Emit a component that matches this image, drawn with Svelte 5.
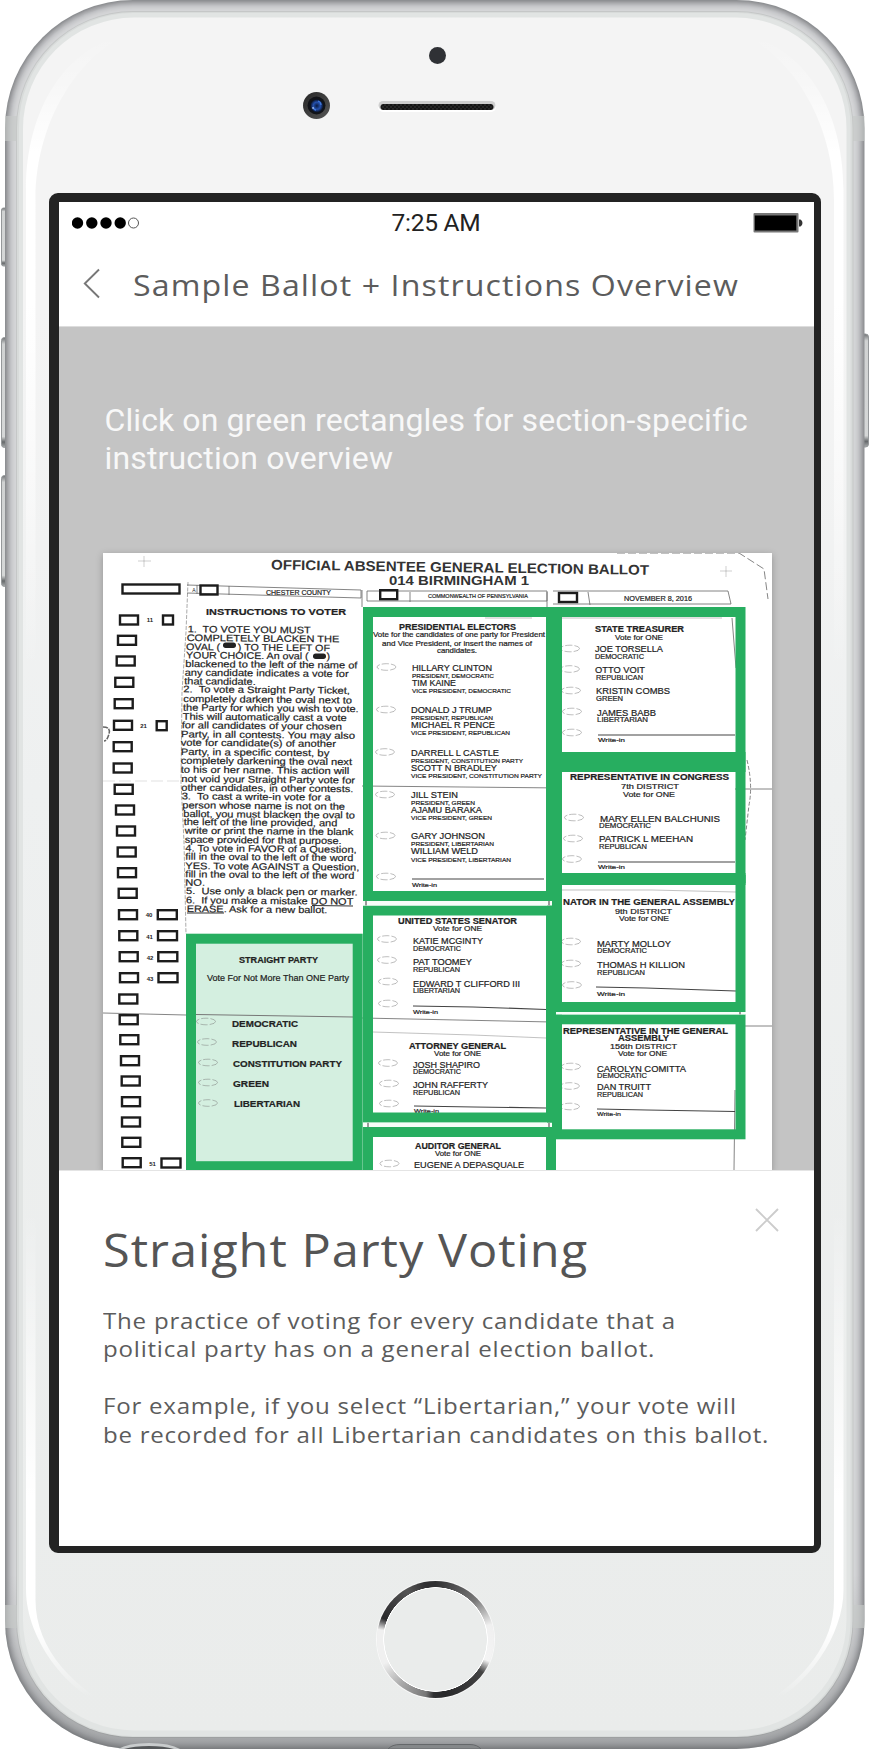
<script>
  const STRETCH = 1.07;

  // Spread a line's letters so that it fills the given measure.
  function fit(node, width) {
    const natural = node.offsetWidth;
    const wide = getComputedStyle(node).transform !== 'none';
    node.style.letterSpacing = ((wide ? width / STRETCH : width) - natural) / (node.textContent.length - 1) + 'px';
  }

  const shell = ['#8e9093', '#98999c', '#a3a4a7', '#adaeb1', '#b6b7ba', '#bfc0c3', '#c6c7ca', '#cbccce', '#cfd0d2', '#d2d3d5', '#d4d5d7', '#c5c7c7'];

  const boxes = [
    [129, 620], [127, 640.3], [125.7, 661], [124.3, 682.3], [123.7, 703.7], [123, 725.3], [122.7, 746.7],
    [122.7, 768], [123.7, 789.3], [125, 810], [126, 831], [126.7, 852], [127, 872.7], [127.7, 893.3],
    [128, 914.7], [128.3, 935.7], [128.7, 956.7], [129, 977.7], [128.3, 999], [128.7, 1019.7], [129.3, 1039.7],
    [130, 1060.7], [130.7, 1081], [131, 1101.7], [131, 1122], [131.3, 1142.3], [131.7, 1162.7]
  ].map(([x, y]) => [x, y, 18]).concat([
    [168, 620, 10], [161.7, 725.7, 10], [167.3, 914.7, 19], [167.5, 935.7, 19], [167.8, 956.7, 19], [168, 977.7, 19], [171, 1163, 19],
    [209, 590, 17], [388.7, 594.7, 17], [568, 597.5, 18]
  ]);
  const codes = [['11', 150, 622], ['21', 143.5, 728], ['40', 149, 917], ['41', 149.5, 938.5], ['42', 150, 959.5], ['43', 150, 980.5], ['51', 152.5, 1166]];

  // text, left and right edge, baseline
  const instructions = [
    ['1.  TO VOTE YOU MUST', 293, 662, 277], ['COMPLETELY BLACKEN THE', 290, 748, 303],
    ['OVAL (      ) TO THE LEFT OF', 288, 720, 330], ['YOUR CHOICE. An oval (      )', 288, 720, 355],
    ['blackened to the left of the name of', 286, 802, 381], ['any candidate indicates a vote for', 284, 776, 407],
    ['that candidate.', 283, 497, 433], ['2.  To vote a Straight Party Ticket,', 280, 780, 457],
    ['completely darken the oval next to', 280, 786, 486], ['the Party for which you wish to vote.', 279, 806, 512],
    ['This will automatically cast a vote', 278, 770, 539], ['for all candidates of your chosen', 275, 756, 565],
    ['Party, in all contests. You may also', 273, 795, 592], ['vote for candidate(s) of another', 272, 738, 617],
    ['Party, in a specific contest, by', 272, 718, 645], ['completely darkening the oval next', 272, 786, 671],
    ['to his or her name. This action will', 272, 778, 698], ['not void your Straight Party vote for', 274, 795, 726],
    ['other candidates, in other contests.', 274, 790, 752], ['3.  To cast a write-in vote for a', 275, 722, 778],
    ['person whose name is not on the', 277, 765, 805], ['ballot, you must blacken the oval to', 280, 795, 831],
    ['the left of the line provided, and', 281, 742, 855], ['write or print the name in the blank', 284, 790, 881],
    ['space provided for that purpose.', 284, 755, 908], ['4. To vote in FAVOR of a Question,', 286, 800, 934],
    ['fill in the oval to the left of the word', 286, 790, 959], ['YES. To vote AGAINST a Question,', 286, 808, 987],
    ['fill in the oval to the left of the word', 286, 793, 1012], ['NO.', 286, 345, 1037],
    ['5.  Use only a black pen or marker.', 288, 803, 1062], ['6.  If you make a mistake DO NOT', 288, 790, 1090],
    ['ERASE. Ask for a new ballot.', 290, 712, 1116]
  ].map(([t, a, b, y]) => [t, 90 + a / 3, 90 + b / 3, 540 + y / 3]);

  // text, left and right edge, baseline, type size, weight
  const labels = [
    ['CHESTER COUNTY', 266, 331, 594.5, 7, 400], ['COMMONWEALTH OF PENNSYLVANIA', 428, 528, 597.5, 6, 400], ['NOVEMBER 8, 2016', 624, 692, 600.5, 7, 400],
    ['INSTRUCTIONS TO VOTER', 206, 346, 614.5, 9, 700],
    ['PRESIDENTIAL ELECTORS', 399, 516, 630, 8.5, 700], ['Vote for the candidates of one party for President', 373, 545, 637, 7, 400],
    ['and Vice President, or insert the names of', 382, 532, 645.5, 7, 400], ['candidates.', 437, 477, 653, 7, 400],
    ['HILLARY CLINTON', 412, 492, 671, 8.5, 500], ['PRESIDENT, DEMOCRATIC', 412, 494, 678, 6, 400], ['TIM KAINE', 412, 456, 686, 8.5, 500], ['VICE PRESIDENT, DEMOCRATIC', 412, 511, 693, 6, 400],
    ['DONALD J TRUMP', 411, 492, 713, 8.5, 500], ['PRESIDENT, REPUBLICAN', 411, 493, 720, 6, 400], ['MICHAEL R PENCE', 411, 495, 728, 8.5, 500], ['VICE PRESIDENT, REPUBLICAN', 411, 510, 735, 6, 400],
    ['DARRELL L CASTLE', 411, 499, 755.5, 8.5, 500], ['PRESIDENT, CONSTITUTION PARTY', 411, 523, 762.5, 6, 400], ['SCOTT N BRADLEY', 411, 497, 771, 8.5, 500], ['VICE PRESIDENT, CONSTITUTION PARTY', 411, 542, 778, 6, 400],
    ['JILL STEIN', 411, 458, 798, 8.5, 500], ['PRESIDENT, GREEN', 411, 475, 804.5, 6, 400], ['AJAMU BARAKA', 411, 482, 813, 8.5, 500], ['VICE PRESIDENT, GREEN', 411, 492, 819.5, 6, 400],
    ['GARY JOHNSON', 411, 485, 839, 8.5, 500], ['PRESIDENT, LIBERTARIAN', 411, 494, 846, 6, 400], ['WILLIAM WELD', 411, 478, 854, 8.5, 500], ['VICE PRESIDENT, LIBERTARIAN', 411, 511, 861.5, 6, 400],
    ['Write-in', 412, 437, 887, 6, 400],
    ['STATE TREASURER', 595, 684, 632, 8.5, 700], ['Vote for ONE', 615, 663, 639.5, 7.5, 400],
    ['JOE TORSELLA', 595, 663, 652, 8.5, 500], ['DEMOCRATIC', 595, 644, 659, 7, 400], ['OTTO VOIT', 595, 645, 673, 8.5, 500], ['REPUBLICAN', 596, 643, 680, 7, 400],
    ['KRISTIN COMBS', 596, 670, 694, 8.5, 500], ['GREEN', 596, 623, 701, 7, 400], ['JAMES BABB', 597, 656, 715.5, 8.5, 500], ['LIBERTARIAN', 597, 648, 722, 7, 400], ['Write-in', 598, 625, 742, 6, 400],
    ['REPRESENTATIVE IN CONGRESS', 570, 729, 780, 8.5, 700], ['7th DISTRICT', 621, 679, 789, 7.5, 400], ['Vote for ONE', 623, 675, 796.5, 7.5, 400],
    ['MARY ELLEN BALCHUNIS', 600, 720, 821.5, 8.5, 500], ['DEMOCRATIC', 599, 651, 828, 7, 400], ['PATRICK L MEEHAN', 599, 693, 842, 8.5, 500], ['REPUBLICAN', 599, 647, 849, 7, 400], ['Write-in', 598, 625, 869, 6, 400],
    ['NATOR IN THE GENERAL ASSEMBLY', 563, 735, 905, 9, 700], ['9th DISTRICT', 615, 672, 913.5, 7.5, 400], ['Vote for ONE', 619, 669, 921, 7.5, 400],
    ['MARTY MOLLOY', 597, 671, 946.5, 9, 500], ['DEMOCRATIC', 597, 647, 953, 7, 400], ['THOMAS H KILLION', 597, 685, 968, 9, 500], ['REPUBLICAN', 597, 645, 975, 7, 400], ['Write-in', 597, 625, 996, 6, 400],
    ['REPRESENTATIVE IN THE GENERAL', 563, 728, 1033.5, 8.5, 700], ['ASSEMBLY', 618, 669, 1040.5, 8.5, 700], ['156th DISTRICT', 610, 677, 1048.5, 7.5, 400], ['Vote for ONE', 618, 667, 1056, 7, 400],
    ['CAROLYN COMITTA', 597, 686, 1071.5, 8.5, 500], ['DEMOCRATIC', 597, 647, 1077.5, 7, 400], ['DAN TRUITT', 597, 651, 1090, 8.5, 500], ['REPUBLICAN', 597, 643, 1097, 7, 400], ['Write-in', 597, 621, 1116, 6, 400],
    ['UNITED STATES SENATOR', 398, 517, 923.5, 8.5, 700], ['Vote for ONE', 433, 482, 931, 7.5, 400],
    ['KATIE MCGINTY', 413, 483, 943.5, 9, 500], ['DEMOCRATIC', 413, 461, 951, 7, 400], ['PAT TOOMEY', 413, 472, 965, 9, 500], ['REPUBLICAN', 413, 460, 972, 7, 400],
    ['EDWARD T CLIFFORD III', 413, 520, 987, 9, 500], ['LIBERTARIAN', 413, 460, 993, 7, 400], ['Write-in', 413, 438, 1014, 6, 400],
    ['ATTORNEY GENERAL', 409, 506, 1049, 8.5, 700], ['Vote for ONE', 434, 481, 1055.5, 7, 400],
    ['JOSH SHAPIRO', 413, 480, 1068, 9, 500], ['DEMOCRATIC', 413, 461, 1074, 7, 400], ['JOHN RAFFERTY', 413, 488, 1088, 9, 500], ['REPUBLICAN', 413, 460, 1094.5, 7, 400], ['Write-in', 414, 439, 1113, 6, 400],
    ['AUDITOR GENERAL', 415, 501, 1149, 9, 700], ['Vote for ONE', 435, 481, 1156, 7, 400], ['EUGENE A DEPASQUALE', 414, 524, 1168, 9, 500],
    ['STRAIGHT PARTY', 239, 318, 963, 8.5, 700], ['Vote For Not More Than ONE Party', 207, 349, 980.5, 8.5, 400],
    ['DEMOCRATIC', 232, 298, 1026.5, 9.5, 700], ['REPUBLICAN', 232, 297, 1046.5, 9.5, 700], ['CONSTITUTION PARTY', 233, 342, 1066.5, 9.5, 700], ['GREEN', 233, 269, 1087, 9.5, 700], ['LIBERTARIAN', 234, 300, 1107, 9.5, 700]
  ];

  const ovals = [
    [386.5, 667], [386, 709.5], [385, 752], [385, 794.5], [385.5, 835.5], [386, 876.5],
    [570, 648.5], [570, 669], [571, 690.5], [572, 711.5], [572, 732.5], [574, 817.5], [573, 838.5], [572, 859],
    [571, 941.5], [571, 963.5], [572, 985], [571, 1066.5], [570, 1086], [570, 1106.5],
    [387, 939], [387, 960], [388, 981.5], [388, 1003.5], [388, 1063], [389, 1083.5], [389, 1103.5], [389.5, 1163.5],
    [206, 1021.5], [207, 1042], [208, 1062.5], [208, 1082.5], [208, 1103]
  ];

  const zones = [
    [368, 612, 183, 284], [368, 910.5, 183, 207], [368, 1132, 183, 60],
    [557, 612, 183.5, 145], [557, 767, 183.5, 111], [557, 880, 183.5, 127], [557, 1019.3, 183.5, 115]
  ];
</script>

<main class="phone">
  <svg class="frame" width="869" height="1749" viewBox="0 0 869 1749">
    <defs>
      <linearGradient id="face" x1="0" y1="0" x2="0" y2="1"><stop offset="0" stop-color="#f4f4f4" /><stop offset=".17" stop-color="#f4f4f4" /><stop offset=".45" stop-color="#eef0f0" /><stop offset="1" stop-color="#eaeceb" /></linearGradient>
      <linearGradient id="shine" x1="0" y1="0" x2="0" y2="1"><stop offset="0" stop-color="#fff" stop-opacity="0" /><stop offset=".03" stop-color="#fff" stop-opacity=".3" /><stop offset=".07" stop-color="#fff" /><stop offset=".16" stop-color="#fff" /><stop offset=".38" stop-color="#fff" stop-opacity="0" /><stop offset=".7" stop-color="#fff" stop-opacity="0" /><stop offset=".87" stop-color="#fff" /><stop offset=".95" stop-color="#fff" /><stop offset=".99" stop-color="#fff" stop-opacity="0" /></linearGradient>
      <linearGradient id="key" x1="0" y1="0" x2="0" y2="1"><stop offset="0" stop-color="#6e7173" /><stop offset=".06" stop-color="#d0d2d2" /><stop offset=".9" stop-color="#d5d7d7" /><stop offset=".95" stop-color="#66696b" /><stop offset="1" stop-color="#aaadae" /></linearGradient>
      <linearGradient id="foot" x1="0" y1="0" x2="0" y2="1"><stop offset=".9" stop-color="#777a7c" stop-opacity="0" /><stop offset="1" stop-color="#66696b" stop-opacity=".45" /></linearGradient>
    </defs>
    <g fill="url(#key)" stroke="#95989a" stroke-width="1">
      <rect x="1.5" y="208" width="8" height="58" rx="2" />
      <rect x="1.5" y="337.5" width="9" height="110" rx="3" />
      <rect x="1.5" y="475.5" width="9" height="111" rx="3" />
      <rect x="859" y="334" width="9.500" height="113" rx="3" />
    </g>
    {#each shell as color, i}
      <rect x={5 + i} y={i} width={859.5 - 2 * i} height={1749 - 2 * i} rx={128 - i} fill={color} />
    {/each}
    <rect x="5" y="0" width="859.5" height="1749" rx="128" fill="url(#foot)" />
    <path d="M5 116h12v25H5zM852.500 116h12v25h-12zM5 1605h12v23H5zM852.500 1605h12v23h-12z" fill="#c6c9c8" opacity=".65" />
    <rect x="17" y="12" width="835.5" height="1725" rx="116" fill="#d8dbda" />
    <rect x="19" y="13" width="831.5" height="1723" rx="114" fill="#e1e4e3" />
    <rect x="23" y="17.500" width="823.5" height="1713" rx="111" fill="url(#face)" />
    <path d="M130 34C65 45 26 110 26 190V1590C26 1640 70 1700 125 1714C75 1690 35.500 1650 35.500 1600V200C35.500 115 85 50 130 34Z" fill="url(#shine)" />
    <path d="M739.500 34C804.500 45 843.500 110 843.500 190V1590C843.500 1640 799.500 1700 744.500 1714C794.500 1690 834 1650 834 1600V200C834 115 784.500 50 739.500 34Z" fill="url(#shine)" />
    <path d="M118 1749Q128 1743 149 1743T180 1749Z" fill="#c9cccd" />
    <path d="M124 1749Q134 1746 149 1746T174 1749Z" fill="#55585a" />
    <path d="M388 1749Q392 1744.500 400 1744.500H470Q477 1744.500 481 1749Z" fill="#85888a" stroke="#65686a" />
  </svg>

  <div class="forehead">
    <svg width="869" height="193" viewBox="0 0 869 193">
      <defs>
        <linearGradient id="rim" x1="0" y1="0" x2="1" y2="1"><stop offset="0" stop-color="#262626" /><stop offset="1" stop-color="#565656" /></linearGradient>
        <radialGradient id="lens"><stop offset="0" stop-color="#0b1a3e" /><stop offset=".55" stop-color="#2450ad" /><stop offset="1" stop-color="#0a1124" /></radialGradient>
        <pattern id="mesh" width="4" height="4" patternUnits="userSpaceOnUse"><rect width="4" height="4" fill="#151515" /><circle cx="1" cy="1" r=".8" fill="#3a3a3a" /><circle cx="3" cy="3" r=".8" fill="#3a3a3a" /></pattern>
      </defs>
      <circle cx="437.5" cy="55.500" r="8.500" fill="#2f3135" />
      <circle cx="316.5" cy="105.500" r="13.500" fill="url(#rim)" />
      <circle cx="316.5" cy="105.500" r="9" fill="#111318" />
      <circle cx="316.8" cy="105.800" r="6.500" fill="url(#lens)" />
      <path d="M313 107q1 3 3 3M318 101q3 1 3 4" stroke="#3f77dc" stroke-width="1.300" fill="none" />
      <circle cx="313" cy="108" r=".8" fill="#d9e6ff" />
      <rect x="378" y="102" width="118" height="10" rx="5" fill="#fff" />
      <rect x="378.500" y="101" width="117" height="9" rx="4.500" fill="#cfcfcf" />
      <rect x="380.500" y="104" width="113" height="6" rx="3" fill="url(#mesh)" />
    </svg>
  </div>

  <section class="screen">
    <div class="status">
      <svg width="70" height="14" viewBox="0 0 70 14">
        {#each [5.5, 19.8, 34, 48.2] as x}<circle cx={x} cy="7" r="5.700" />{/each}
        <circle cx="61.5" cy="7" r="5" fill="none" stroke="#555" stroke-width="1" />
      </svg>
      <span class="time">7:25 AM</span>
      <svg class="battery" width="50" height="22" viewBox="0 0 50 22">
        <rect x=".5" y="1" width="45" height="19.500" rx="1" fill="#777" />
        <rect x="1.800" y="3.500" width="41.500" height="15" />
        <path d="M46 7.500h1.500q2 1 2 3.500t-2 3.500H46z" fill="#333" />
      </svg>
    </div>
    <header>
      <svg width="18" height="32" viewBox="0 0 18 32"><path d="M16 1.500 1.800 15.500 16 29.500" fill="none" stroke="#777" stroke-width="1.900" /></svg>
      <h1><span class="wide" use:fit={605}>Sample Ballot + Instructions Overview</span></h1>
    </header>

    <div class="stage">
      <p class="hint"><span use:fit={642}>Click on green rectangles for section-specific</span><br /><span use:fit={288}>instruction overview</span></p>
      <svg class="ballot" width="669" height="618" viewBox="103 553 669 618">
        <rect x="103" y="553" width="669" height="618" fill="#fff" />
        <g class="rules">
          <path d="M103 781l85 0" opacity=".25" stroke-dasharray="12 4" />
          <path d="M362 786l200 2M735 789h37M103 1013l83 2 167 2M362 1018l190 4M745 1026h27" />
          <path d="M188 582l-2 50-4 60-1 90 3 60 2 92" stroke-dasharray="4 1.500" opacity=".7" />
          <path d="M187 585l174 5v8l-174-5M367 591h180v10H367zM553 591h175l3 13H553M410 592v10M588 592l2 13M229 586v9M197 585v9M362 590v17M547 592v15" />
          <path d="M617 553l50 0h72l25 16 4 30" stroke-dasharray="8 3" />
          <path d="M747 760q6 25 2 45l-4 35" stroke-dasharray="4 2" />
          <path d="M732 618l4 50M735 1090l-1 80" />
          <path d="M562 618h160M485 618h47M562 890h90l84 2M373 1032l100 3 73 3" opacity=".5" />
          <path d="M144 556v11M138 561h13M726 566v11M720 571h12" opacity=".4" />
          <path d="M103 727q8 0 6 7t-5 7" stroke-width="1.500" stroke-dasharray="5 1" />
        </g>
        <g class="writein"><path d="M412 879h132M598 735h137M598 862h137M596 987l50 1 90 3M597 1109l50 1 88 1.500M413 1006l60 1 73 2.500M414 1106l60 1 72 1" /></g>
        <rect x="122.500" y="584.500" width="57" height="9" class="box" />
        {#each boxes as [x, y, w]}
          <rect x={x - w / 2} y={y - 4.5} width={w} height="9" class="box" />
        {/each}
        {#each codes as [t, x, y]}<text {x} {y} text-anchor="middle" font-size="6" font-weight="700">{t}</text>{/each}
        <text x="194" y="592" text-anchor="middle" font-size="5">A</text>
        <g font-weight="700" fill="#333">
          <text x="271" y="569.5" font-size="14" textLength="378" lengthAdjust="spacingAndGlyphs" transform="rotate(.8 271 569)">OFFICIAL ABSENTEE GENERAL ELECTION BALLOT</text>
          <text x="389" y="584.5" font-size="12.500" textLength="140" lengthAdjust="spacingAndGlyphs">014 BIRMINGHAM 1</text>
        </g>
        <g class="copy">
          {#each instructions as [t, a, b, y]}
            <text x={a} y={y} font-size="9.500" textLength={b - a} lengthAdjust="spacingAndGlyphs" transform="rotate(.5 {a} {y})" xml:space="preserve">{t}</text>
          {/each}
        </g>
        <path d="M312 905.500l41 .500M187 913h37" stroke="#333" />
        <rect x="223" y="642.500" width="13" height="5.500" rx="2.700" />
        <rect x="313" y="653.500" width="13" height="5.500" rx="2.700" />
        <rect x="191" y="938.700" width="166.700" height="227.500" fill="#d4efe0" />
        <path d="M196 1014.500l157 2.500" stroke="#777" />
        {#each ovals as [x, y]}
          <ellipse cx={x} cy={y} rx="9.500" ry="3.300" fill="none" stroke="#777" stroke-width=".8" stroke-dasharray="7 2" opacity=".6" />
        {/each}
        <g class="copy">
          {#each labels as [t, a, b, y, size, weight]}
            <text x={a} {y} font-size={size} font-weight={weight} textLength={b - a} lengthAdjust="spacingAndGlyphs">{t}</text>
          {/each}
        </g>
        <g fill="none" stroke="#27ae60" stroke-width="10">
          {#each zones as [x, y, w, h]}<rect {x} {y} width={w} height={h} />{/each}
          <rect x="191" y="938.700" width="166.700" height="227.500" />
          <path d="M554.500 607v532" stroke-width="15" />
          <path d="M557 762h188.500" stroke-width="20" />
          <path d="M557 879h188.500" stroke-width="12" />
        </g>
        <path d="M363 901h189v4.500H363zM556 1012h189.500v2.500H556zM363 1122.700h189v4.300H363z" fill="#f7fdf9" />
        <path d="M366 901v4.500M549 901v4.500M368 1122.700v4.300M549 1122.700v4.300M740 1012v2.500" stroke="#999" stroke-width="2" />
      </svg>
    </div>

    <article>
      <button aria-label="Close"><svg width="24" height="24" viewBox="0 0 24 24"><path d="M1 1 23 23M23 1 1 23" stroke="#ccc" stroke-width="1.900" /></svg></button>
      <h2><span class="wide" use:fit={484}>Straight Party Voting</span></h2>
      <p><span class="wide" use:fit={572}>The practice of voting for every candidate that a</span><br /><span class="wide" use:fit={551}>political party has on a general election ballot.</span></p>
      <p><span class="wide" use:fit={633}>For example, if you select “Libertarian,” your vote will</span><br /><span class="wide" use:fit={665}>be recorded for all Libertarian candidates on this ballot.</span></p>
    </article>
  </section>

  <div class="chin"><div class="home"></div></div>
</main>

<style>
  :global(body) { background: #fff; }
  .phone { position: relative; width: 869px; height: 1749px; overflow: hidden; display: flex; flex-direction: column; align-items: center; }
  .frame { position: absolute; inset: 0; }
  .forehead, .screen, .chin { position: relative; }
  .forehead { height: 193px; width: 100%; }
  svg { display: block; flex: none; }
  .screen { box-sizing: border-box; width: 772px; height: 1360px; border: solid #232323; border-width: 9px 7px 7px 10px; border-radius: 9px; background: #fff; display: flex; flex-direction: column; overflow: hidden; font-family: "Open Sans", "Noto Sans", sans-serif; }
  .status { display: grid; grid-template-columns: 1fr auto 1fr; align-items: center; height: 42px; padding: 0 11px 0 13px; flex: none; }
  .time { font: 24.5px/42px Roboto, sans-serif; color: #222; letter-spacing: -.25px; margin-left: -2px; }
  .battery { justify-self: end; }
  header { display: flex; align-items: center; height: 82px; padding-left: 24px; gap: 32.5px; flex: none; }
  header svg { margin-top: -3px; }
  h1, h2, p { margin: 0; font-weight: 400; }
  h1 { font-size: 30px; line-height: 82px; height: 82px; color: #5c5c5c; white-space: nowrap; }
  .stage { height: 844px; flex: none; background: #c4c4c4; border-top: 1px solid #ddd; box-sizing: border-box; display: flex; flex-direction: column; overflow: hidden; }
  .hint { font: 32px/38px Roboto, sans-serif; color: #f8f8f8; padding: 74px 0 0 46px; height: 226px; box-sizing: border-box; white-space: nowrap; flex: none; }
  .hint span, .wide { display: inline-block; }
  .wide { transform: scaleX(1.07); transform-origin: left; }
  .ballot { margin-left: 44px; box-shadow: 0 2px 7px rgba(0, 0, 0, .25); font-family: "Liberation Sans", Arial, sans-serif; fill: #222; }
  .copy { stroke: #222; stroke-width: .2; }
  .box { fill: none; stroke: #1c1c1c; stroke-width: 2.4; }
  .rules { fill: none; stroke: #666; stroke-width: .8; }
  .writein { fill: none; stroke: #444; stroke-width: 1.2; }
  article { position: relative; flex: 1; padding: 47px 0 0 44.5px; border-top: 1px solid #e4e4e4; color: #5c5c5c; white-space: nowrap; background: #fff; }
  h2 { font-size: 45.5px; line-height: 62px; color: #555; margin-bottom: 27px; }
  article p { font-size: 22.5px; line-height: 28.4px; margin-bottom: 28.4px; }
  button { position: absolute; right: 35px; top: 37px; padding: 0; border: 0; background: none; }
  .chin { width: 100%; display: flex; justify-content: center; padding-top: 28px; }
  .home { width: 117px; height: 117px; margin-left: 2px; border-radius: 50%; box-shadow: 0 0 0 1px #f8f8f8; background: radial-gradient(circle, #eaeceb 51px, #fff 51.5px, #fff 52px, transparent 52.5px), conic-gradient(#303032, #777 45deg, #f0f0f0 75deg, #f4f4f4 112deg, #444 125deg, #28282a 170deg, #303032 182deg, #777 190deg, #aaa 218deg, #f0f0f0 245deg, #f0f0f0 280deg, #28282a 292deg, #555 330deg, #303032 350deg, #303032); }
</style>
